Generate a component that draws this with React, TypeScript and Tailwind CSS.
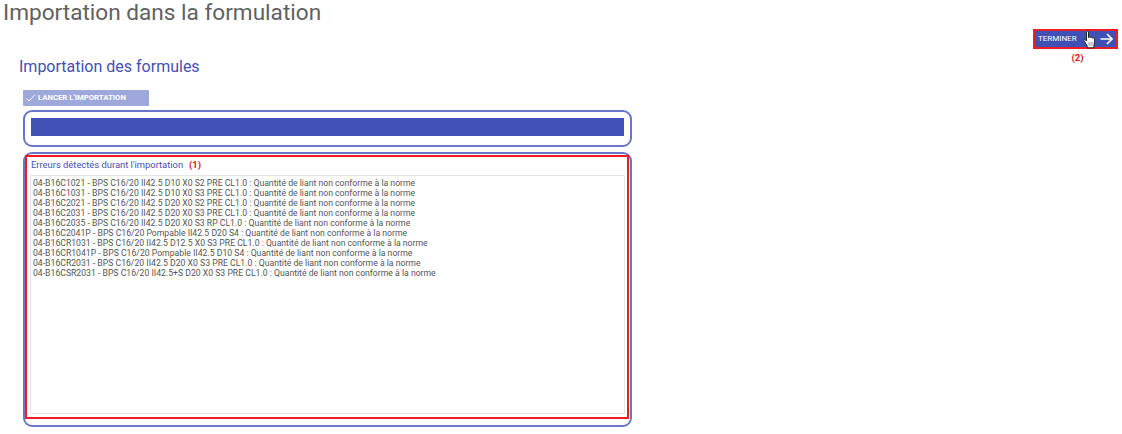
import React from "react";

const lines = [
  "04-B16C1021 - BPS C16/20 II42.5 D10 X0 S2 PRE CL1.0 : Quantité de liant non conforme à la norme",
  "04-B16C1031 - BPS C16/20 II42.5 D10 X0 S3 PRE CL1.0 : Quantité de liant non conforme à la norme",
  "04-B16C2021 - BPS C16/20 II42.5 D20 X0 S2 PRE CL1.0 : Quantité de liant non conforme à la norme",
  "04-B16C2031 - BPS C16/20 II42.5 D20 X0 S3 PRE CL1.0 : Quantité de liant non conforme à la norme",
  "04-B16C2035 - BPS C16/20 II42.5 D20 X0 S3 RP CL1.0 : Quantité de liant non conforme à la norme",
  "04-B16C2041P - BPS C16/20 Pompable II42.5 D20 S4 : Quantité de liant non conforme à la norme",
  "04-B16CR1031 - BPS C16/20 II42.5 D12.5 X0 S3 PRE CL1.0 : Quantité de liant non conforme à la norme",
  "04-B16CR1041P - BPS C16/20 Pompable II42.5 D10 S4 : Quantité de liant non conforme à la norme",
  "04-B16CR2031 - BPS C16/20 II42.5 D20 X0 S3 PRE CL1.0 : Quantité de liant non conforme à la norme",
  "04-B16CSR2031 - BPS C16/20 II42.5+S D20 X0 S3 PRE CL1.0 : Quantité de liant non conforme à la norme",
];

function Hand() {
  return (
    <svg width="13" height="19" viewBox="0 0 13 19" className="absolute left-[48px] top-[-1px]">
      <path
        d="M3.500 2 C3.500 0.600 5.500 0.600 5.500 2 L5.500 7.500 C5.700 6.600 7.300 6.700 7.400 7.700 C7.700 6.900 9.200 7.100 9.300 8.200 C9.700 7.500 11.500 7.700 11.600 9 L11.700 13 L10.600 17.800 L4.500 17.800 L3.800 15 L1 11 C0.300 9.900 1.500 9 2.400 9.800 L3.500 11 Z"
        fill="#ffffff"
        stroke="#222222"
        strokeWidth="1"
        strokeLinejoin="round"
      />
      <path d="M6 12 V16 M8 12 V16 M10 12 V16" stroke="#555555" strokeWidth="0.6" fill="none" />
    </svg>
  );
}

export default function App() {
  return (
    <div className="flex justify-between w-[1122px] h-[434px] overflow-hidden bg-white pr-[4px] font-['Roboto',sans-serif]">
      <div className="w-[650px]">
        <h1 className="pl-[3px] text-[22.600px] leading-[26px] text-[#616161]">Importation dans la formulation</h1>
        <h2 className="mt-[29px] pl-[19px] text-[16px] leading-[24px] text-[#4450b5]">Importation des formules</h2>

        <div className="mt-[11px] ml-[23px] w-[609px]">
          <button className="flex items-center gap-[2px] w-[126px] h-[16px] pl-[3px] bg-[#9fa8da] text-white text-[7.750px] font-bold leading-none rounded-[1px]">
            <svg width="10" height="8" viewBox="0 0 10 8" fill="none" stroke="#ffffff" strokeWidth="1">
              <path d="M0.500 4.500 L3 7 L9 0.800" />
            </svg>
            <span>LANCER L'IMPORTATION</span>
          </button>

          <div className="mt-[4px] h-[37px] rounded-[9px] border-2 border-[#6a75c8] pl-[6px] pr-[6px] pt-[6px]">
            <div className="h-[18px] bg-[#3f51b5]" />
          </div>

          <div className="mt-[5px] h-[275px] rounded-[9px] border-2 border-[#6a75c8] pl-0 pr-[1px] pt-[1px]">
            <div className="h-[264px] border-2 border-[#ee1c25] pl-[3px] pr-[2px] pt-[1px]">
              <p className="flex gap-[6px] pl-[1px] text-[9.400px] leading-[14px] text-[#4450b5]">
                <span>Erreurs détectés durant l'importation</span>
                <span className="font-bold text-[#d9141c]">(1)</span>
              </p>
              <div className="mt-[3px] h-[239px] border border-[#e6e6e6] pl-[2px] pt-[2px] text-[8.670px] leading-[10px] text-[#555555]">
                {lines.map((l) => (
                  <div key={l} className="whitespace-nowrap">{l}</div>
                ))}
              </div>
            </div>
          </div>
        </div>
      </div>

      <div className="flex flex-col items-center pt-[29px] gap-[2px]">
        <button className="relative w-[85px] h-[20px] border-2 border-[#ee1c25] bg-[#3f51b5] text-white flex items-center justify-between pl-[3px] pr-[3px]">
          <span className="text-[8px] leading-none">TERMINER</span>
          <svg width="13" height="12" viewBox="0 0 13 12" fill="none" stroke="#ffffff" strokeWidth="1.600">
            <path d="M0.500 6 H12 M7 1 L12 6 L7 11" />
          </svg>
          <Hand />
        </button>
        <span className="pl-[4px] text-[9.500px] leading-[14px] font-bold text-[#d9141c]">(2)</span>
      </div>
    </div>
  );
}
